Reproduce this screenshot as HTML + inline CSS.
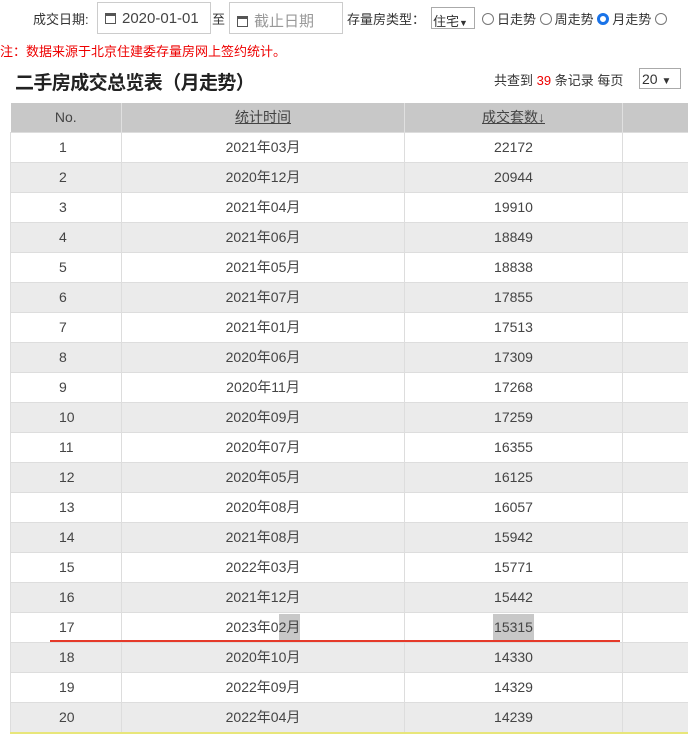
<!DOCTYPE html>
<html><head><meta charset="utf-8"><style>
body{margin:0;width:688px;height:734px;overflow:hidden;background:#fff;font-family:"Liberation Sans","Noto Sans CJK SC",sans-serif;font-size:13px;color:#333;position:relative}
.a{position:absolute;white-space:nowrap}
.box{position:absolute;border:1px solid #ccc;background:#fff;box-sizing:border-box}
.cal{display:inline-block;width:11px;height:11px;border:1px solid #555;border-top-width:3px;box-sizing:border-box;margin-right:6px;vertical-align:-1px}
.rad{display:inline-block;width:12px;height:12px;border:1px solid #777;border-radius:50%;box-sizing:border-box;vertical-align:-1px;margin-right:3px}
table{position:absolute;left:10px;top:103px;border-collapse:collapse;width:700px}
td,th{height:30px;padding:0;text-align:center;font-weight:normal;font-size:14px;color:#444;border-left:1px solid #ddd;box-sizing:border-box}
th{background:#c8c8c8;border-left:1px solid #e0e0e0;height:29px}
th u{color:#444}
tr:nth-child(odd) td{background:#ebebeb}
tr td{border-top:1px solid #ddd}
td:first-child{text-align:left;padding-left:48px}
</style></head><body>
<div class="a" style="left:33px;top:9px;font-size:13px">成交日期:</div>
<div class="box" style="left:97px;top:2px;width:114px;height:32px;padding:7px 0 0 7px;font-size:15px;color:#444"><span class="cal"></span>2020-01-01</div>
<div class="a" style="left:212px;top:9px">至</div>
<div class="box" style="left:229px;top:2px;width:114px;height:32px;padding:7px 0 0 7px;font-size:15px;color:#999"><span class="cal"></span>截止日期</div>
<div class="a" style="left:347px;top:9px">存量房类型：</div>
<div class="box" style="left:431px;top:7px;width:44px;height:22px;padding:3px 0 0 1px;font-size:13px;border-color:#aaa">住宅<span style="font-size:9px">▼</span></div>
<div class="a" style="left:482px;top:9px"><span class="rad"></span>日走势 <span class="rad"></span>周走势 <span class="rad" style="border:3px solid #1a73e8"></span>月走势 <span class="rad"></span></div>
<div class="a" style="left:0;top:41px;color:#e00;font-size:13px">注：数据来源于北京住建委存量房网上签约统计。</div>
<div class="a" style="left:15px;top:68px;font-size:19px;font-weight:bold;color:#222;letter-spacing:-0.6px">二手房成交总览表（月走势）</div>
<div class="a" style="left:494px;top:70px">共查到 <span style="color:#e00">39</span> 条记录 每页</div>
<div class="box" style="left:639px;top:68px;width:42px;height:21px;padding:2px 0 0 2px;font-size:14px;border-color:#aaa">20 <span style="font-size:10px">▼</span></div>
<table>
<tr><th style="width:111px;border-left:none">No.</th><th style="width:283px"><u>统计时间</u></th><th style="width:218px"><u>成交套数↓</u></th><th></th></tr>
<tr><td>1</td><td>2021年03月</td><td>22172</td><td></td></tr>
<tr><td>2</td><td>2020年12月</td><td>20944</td><td></td></tr>
<tr><td>3</td><td>2021年04月</td><td>19910</td><td></td></tr>
<tr><td>4</td><td>2021年06月</td><td>18849</td><td></td></tr>
<tr><td>5</td><td>2021年05月</td><td>18838</td><td></td></tr>
<tr><td>6</td><td>2021年07月</td><td>17855</td><td></td></tr>
<tr><td>7</td><td>2021年01月</td><td>17513</td><td></td></tr>
<tr><td>8</td><td>2020年06月</td><td>17309</td><td></td></tr>
<tr><td>9</td><td>2020年11月</td><td>17268</td><td></td></tr>
<tr><td>10</td><td>2020年09月</td><td>17259</td><td></td></tr>
<tr><td>11</td><td>2020年07月</td><td>16355</td><td></td></tr>
<tr><td>12</td><td>2020年05月</td><td>16125</td><td></td></tr>
<tr><td>13</td><td>2020年08月</td><td>16057</td><td></td></tr>
<tr><td>14</td><td>2021年08月</td><td>15942</td><td></td></tr>
<tr><td>15</td><td>2022年03月</td><td>15771</td><td></td></tr>
<tr><td>16</td><td>2021年12月</td><td>15442</td><td></td></tr>
<tr><td>17</td><td>2023年0<span style="background:#c8c8c8;padding:5px 0">2月</span></td><td><span style="background:#c8c8c8;padding:5px 1px">15315</span></td><td></td></tr>
<tr><td>18</td><td>2020年10月</td><td>14330</td><td></td></tr>
<tr><td>19</td><td>2022年09月</td><td>14329</td><td></td></tr>
<tr><td>20</td><td>2022年04月</td><td>14239</td><td></td></tr>
</table>
<div class="a" style="left:50px;top:640px;width:570px;height:2px;background:#e53a2a"></div>
<div class="a" style="left:10px;top:732px;width:678px;height:2px;background:#e8e67a"></div>
</body></html>
